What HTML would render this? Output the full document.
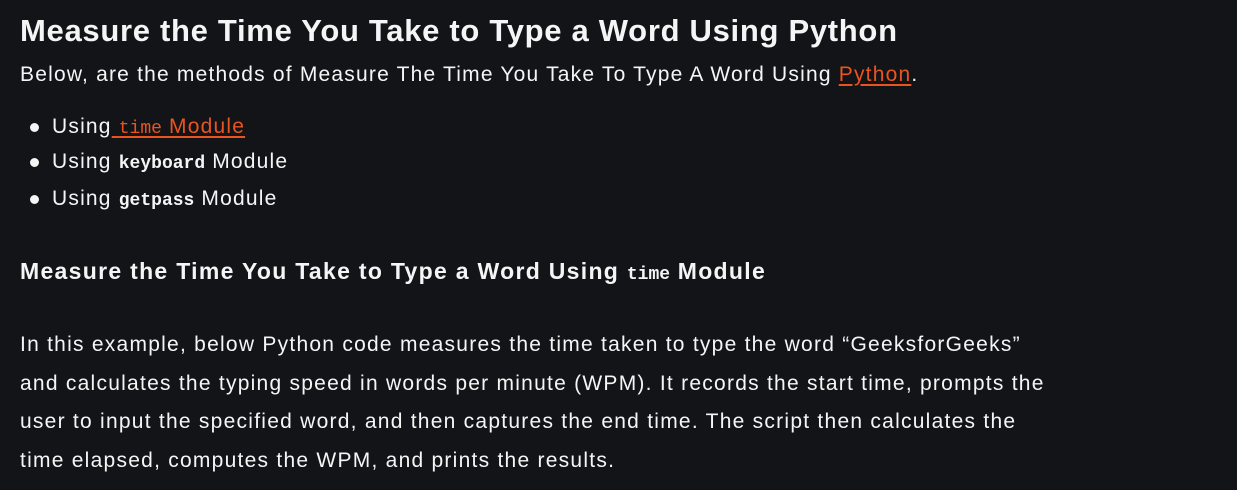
<!DOCTYPE html>
<html><head><meta charset="utf-8"><style>
html,body{margin:0;padding:0;background:#131417;width:1237px;height:490px;overflow:hidden}
body{font-family:"Liberation Sans",Arial,sans-serif;color:#f5f5f5;position:relative}
.a{position:absolute;left:20px;white-space:nowrap}
h1{font-size:31px;font-weight:bold;margin:0;letter-spacing:0.7px}
.t{font-size:21px;letter-spacing:1.2px}
a{color:#e9541f;text-decoration:underline;text-underline-offset:3px}
code{font-family:"Liberation Mono",monospace;font-size:18px;font-weight:bold;letter-spacing:0}
a code{font-weight:normal}
.b{position:absolute;left:30px;width:9px;height:9px;border-radius:50%;background:#f5f5f5}
h3{font-size:23px;font-weight:bold;margin:0;letter-spacing:1.3px}
</style></head><body>
<div class="a" style="top:13px"><h1>Measure the Time You Take to Type a Word Using Python</h1></div>
<div class="a t" style="top:63px">Below, are the methods of Measure The Time You Take To Type A Word Using <a>Python</a>.</div>
<div class="b" style="top:123px"></div>
<div class="a t" style="left:52px;top:115px">Using<a> <code>time</code> Module</a></div>
<div class="b" style="top:158px"></div>
<div class="a t" style="left:52px;top:150px">Using <code>keyboard</code> Module</div>
<div class="b" style="top:195px"></div>
<div class="a t" style="left:52px;top:187px">Using <code>getpass</code> Module</div>
<div class="a" style="top:258px"><h3>Measure the Time You Take to Type a Word Using <code>time</code> Module</h3></div>
<div class="a t" style="top:326px;line-height:38.5px;letter-spacing:1.25px">In this example, below Python code measures the time taken to type the word “GeeksforGeeks”<br>and calculates the typing speed in words per minute (WPM). It records the start time, prompts the<br>user to input the specified word, and then captures the end time. The script then calculates the<br>time elapsed, computes the WPM, and prints the results.</div>
</body></html>
